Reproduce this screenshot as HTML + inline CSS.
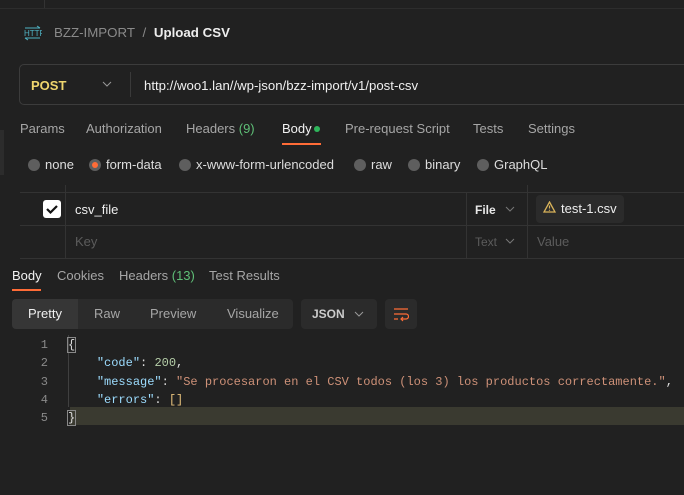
<!DOCTYPE html>
<html><head><style>
*{margin:0;padding:0;box-sizing:border-box}
body{width:684px;height:495px;background:#212121;font-family:"Liberation Sans",sans-serif;color:#ddd;position:relative;overflow:hidden;font-size:13px}
.a{position:absolute;white-space:nowrap}
.g{color:#a6a6a6}
.mono{font-family:"Liberation Mono",monospace;font-size:12px}
.dot{position:absolute;width:12px;height:12px;border-radius:50%;background:#5e5e5e}
</style></head><body>
<div class="a" style="left:0;top:8px;width:684px;height:1px;background:#2d2d2d"></div>
<div class="a" style="left:44px;top:0;width:1px;height:8px;background:#333"></div>
<div class="a" style="left:0;top:130px;width:4px;height:45px;background:#2c2c2c"></div>
<svg class="a" style="left:24px;top:25px" width="18" height="16" viewBox="0 0 18 16"><text x="0" y="11" font-size="8" font-family="Liberation Sans" fill="#4fb3c4">HTTP</text><path d="M1 3h15M13 1l3 2M1 13h15M4 15l-3-2" stroke="#4fb3c4" stroke-width="1" fill="none"/></svg>
<div class="a g" style="left:54px;top:25px;font-size:13.3px;color:#8a8a8a">BZZ-IMPORT <span style="margin:0 4px">/</span> <b style="color:#eee">Upload CSV</b></div>
<div class="a" style="left:19px;top:64px;width:680px;height:41px;border:1px solid #3c3c3c;border-radius:5px"></div>
<div class="a" style="left:31px;top:78px;font-weight:bold;color:#f0d66e">POST</div>
<svg class="a" style="left:102px;top:81px" width="10" height="6"><path d="M1 1l4 4 4-4" stroke="#999" fill="none"/></svg>
<div class="a" style="left:130px;top:72px;width:1px;height:25px;background:#3a3a3a"></div>
<div class="a" style="left:144px;top:78px;color:#f0f0f0;font-size:13.2px">http://woo1.lan//wp-json/bzz-import/v1/post-csv</div>
<div class="a g" style="left:20px;top:121px">Params</div>
<div class="a g" style="left:86px;top:121px">Authorization</div>
<div class="a g" style="left:186px;top:121px">Headers <span style="color:#5fbf77">(9)</span></div>
<div class="a" style="left:282px;top:121px;color:#f2f2f2">Body</div>
<div class="a" style="left:314px;top:126px;width:6px;height:6px;border-radius:50%;background:#2fb65c"></div>
<div class="a" style="left:282px;top:143px;width:39px;height:2px;background:#ff6c37"></div>
<div class="a g" style="left:345px;top:121px">Pre-request Script</div>
<div class="a g" style="left:473px;top:121px">Tests</div>
<div class="a g" style="left:528px;top:121px">Settings</div>
<div class="dot" style="left:28px;top:159px"></div><div class="a" style="left:45px;top:157px">none</div>
<div class="dot" style="left:89px;top:159px;background:#5e5e5e"></div><div class="a" style="left:92px;top:162px;width:6px;height:6px;border-radius:50%;background:#ff6c37"></div><div class="a" style="left:106px;top:157px">form-data</div>
<div class="dot" style="left:179px;top:159px"></div><div class="a" style="left:196px;top:157px">x-www-form-urlencoded</div>
<div class="dot" style="left:354px;top:159px"></div><div class="a" style="left:371px;top:157px">raw</div>
<div class="dot" style="left:408px;top:159px"></div><div class="a" style="left:425px;top:157px">binary</div>
<div class="dot" style="left:477px;top:159px"></div><div class="a" style="left:494px;top:157px">GraphQL</div>
<div class="a" style="left:20px;top:192px;width:664px;height:1px;background:#333"></div>
<div class="a" style="left:20px;top:225px;width:664px;height:1px;background:#333"></div>
<div class="a" style="left:20px;top:258px;width:664px;height:1px;background:#333"></div>
<div class="a" style="left:65px;top:185px;width:1px;height:73px;background:#333"></div>
<div class="a" style="left:466px;top:192px;width:1px;height:66px;background:#333"></div>
<div class="a" style="left:527px;top:185px;width:1px;height:73px;background:#333"></div>
<div class="a" style="left:43px;top:200px;width:18px;height:18px;border-radius:3px;background:#fff"></div>
<svg class="a" style="left:43px;top:200px" width="18" height="18"><path d="M4 9l3.5 3.5L14 6" stroke="#111" stroke-width="2.2" fill="none"/></svg>
<div class="a" style="left:75px;top:202px;color:#eee">csv_file</div>
<div class="a" style="left:75px;top:234px;color:#5c5c5c">Key</div>
<div class="a" style="left:475px;top:203px;font-size:12px;font-weight:bold;color:#e8e8e8">File</div>
<svg class="a" style="left:505px;top:206px" width="10" height="6"><path d="M1 1l4 4 4-4" stroke="#777" fill="none"/></svg>
<div class="a" style="left:475px;top:235px;font-size:12px;color:#5c5c5c">Text</div>
<svg class="a" style="left:505px;top:238px" width="10" height="6"><path d="M1 1l4 4 4-4" stroke="#777" fill="none"/></svg>
<div class="a" style="left:536px;top:195px;width:88px;height:28px;border-radius:4px;background:#2b2b2b"></div>
<svg class="a" style="left:543px;top:201px" width="13" height="12"><path d="M6.5 1L12 11H1z" stroke="#d9b35a" stroke-width="1.3" fill="none"/><path d="M6.5 4.5v3M6.5 8.8v1" stroke="#d9b35a" stroke-width="1.2"/></svg>
<div class="a" style="left:561px;top:201px;color:#eee">test-1.csv</div>
<div class="a" style="left:537px;top:234px;color:#5c5c5c">Value</div>
<div class="a" style="left:12px;top:268px;color:#f2f2f2">Body</div>
<div class="a" style="left:12px;top:289px;width:29px;height:2px;background:#ff6c37"></div>
<div class="a g" style="left:57px;top:268px">Cookies</div>
<div class="a g" style="left:119px;top:268px">Headers <span style="color:#5fbf77">(13)</span></div>
<div class="a g" style="left:209px;top:268px">Test Results</div>
<div class="a" style="left:12px;top:299px;width:281px;height:30px;border-radius:4px;background:#2b2b2b"></div>
<div class="a" style="left:12px;top:299px;width:66px;height:30px;border-radius:4px 0 0 4px;background:#363636"></div>
<div class="a" style="left:28px;top:306px;color:#f0f0f0">Pretty</div>
<div class="a g" style="left:94px;top:306px">Raw</div>
<div class="a g" style="left:150px;top:306px">Preview</div>
<div class="a g" style="left:227px;top:306px">Visualize</div>
<div class="a" style="left:301px;top:299px;width:76px;height:30px;border-radius:4px;background:#2b2b2b"></div>
<div class="a" style="left:312px;top:307px;font-size:12px;font-weight:bold;color:#ccc">JSON</div>
<svg class="a" style="left:354px;top:311px" width="10" height="6"><path d="M1 1l4 4 4-4" stroke="#999" fill="none"/></svg>
<div class="a" style="left:385px;top:299px;width:32px;height:30px;border-radius:4px;background:#2b2b2b"></div>
<svg class="a" style="left:393px;top:306px" width="16" height="16"><path d="M1 3h14M1 8h12a2.5 2.5 0 010 5H8M1 13h4M10 11l-2 2 2 2" stroke="#ff6c37" stroke-width="1.2" fill="none"/></svg>
<div class="a" style="left:70px;top:407px;width:614px;height:18px;background:#3a3a30"></div>
<div class="a" style="left:68px;top:335px;width:1px;height:72px;background:#404040"></div>
<div class="a mono" style="left:40px;top:336px;line-height:18.3px;color:#8a8a8a;text-align:right;width:8px">1<br>2<br>3<br>4<br>5</div>
<div class="a mono" style="left:68px;top:336px;line-height:18.3px;color:#ddd">
<span style="outline:1px solid #888">{</span><br>
&nbsp;&nbsp;&nbsp;&nbsp;<span style="color:#9cdcfe">"code"</span>: <span style="color:#b5cea8">200</span>,<br>
&nbsp;&nbsp;&nbsp;&nbsp;<span style="color:#9cdcfe">"message"</span>: <span style="color:#ce9178">"Se procesaron en el CSV todos (los 3) los productos correctamente."</span>,<br>
&nbsp;&nbsp;&nbsp;&nbsp;<span style="color:#9cdcfe">"errors"</span>: <span style="color:#e5c07b">[]</span><br>
<span style="outline:1px solid #888">}</span></div>
</body></html>
